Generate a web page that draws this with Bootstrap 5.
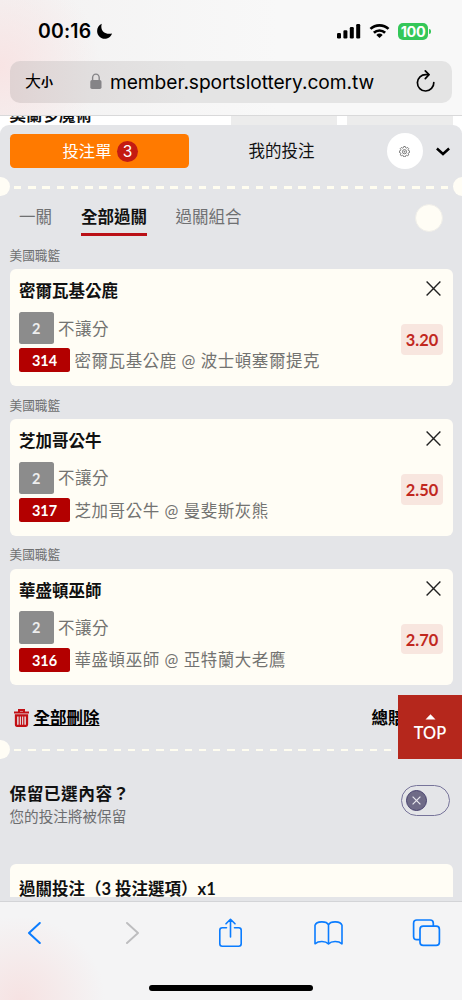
<!DOCTYPE html>
<html lang="zh-Hant">
<head>
<meta charset="utf-8">
<meta name="viewport" content="width=device-width, initial-scale=1">
<title>投注單</title>
<link href="https://cdn.jsdelivr.net/npm/bootstrap@5.3.0/dist/css/bootstrap.min.css" rel="stylesheet">
<style>
  body { font-family: Lato, "Noto Sans CJK TC", sans-serif; font-size: 16.5px; line-height: 24px; color: #111; background: #e4e5e8; }
  svg { display: block; flex: none; }
  .screen { width: 462px; height: 1000px; }
  .browser-top { height: 115.5px; border-bottom: 1px solid #d9d9da; font-family: Inter, "Noto Sans CJK TC", sans-serif; color: #000;
    background: radial-gradient(circle at 0 66px, #f8e4e4 0, rgba(248,228,228,0) 100px), linear-gradient(90deg, #f3f2f2, #f8f8f8 60%); }
  .status-row { height: 60.5px; padding: 2px 31px 0 38px; }
  .clock { font-size: 19.4px; font-weight: 600; letter-spacing: .2px; }
  .battery { width: 30px; height: 17px; border-radius: 5px; background: #34c759; color: #fff; font-size: 14.5px; font-weight: 700; letter-spacing: -.4px; line-height: 17px; }
  .battery-tip { width: 2px; height: 5px; border-radius: 0 2px 2px 0; background: #34c759; margin-left: 1px; }
  .address { height: 42.5px; margin: 0 10px; border-radius: 10px; padding: 0 17px 0 15px;
    background: linear-gradient(90deg, #e0d3d3, #e1dede 18%, #e4e4e4 40%); }
  .text-size { width: 28px; font-size: 16px; }
  .text-size span { font-size: 12px; font-weight: 700; }
  .address .host { font-family: Inter, sans-serif; font-size: 19.2px; letter-spacing: -.06px; }
  .peek { height: 17px; margin-bottom: -8px; background: #fff; font-size: 16.5px; font-weight: 700; }
  .peek-text { width: 231px; padding-left: 9.5px; line-height: 24px; margin-top: -12.5px; height: 28px; }
  .peek-cell { background: #ececec; height: 17px; }
  .page-top { height: 9.5px; overflow: visible; background: #fff; }
  .sheet { background: #e4e5e8; border-radius: 9px 9px 0 0; position: relative; overflow: hidden; }
  .sheet-tabs { height: 52px; padding-left: 9.5px; }
  .slip-btn { width: 179.5px; height: 34px; border-radius: 4.5px; background: #ff7a00; color: #fff; --bs-btn-hover-color: #fff; --bs-btn-hover-bg: #ff7a00; font-size: 16.3px; line-height: 24px; }
  .tally { width: 21px; height: 21px; background: #c41b12; font: 15.5px/21px Inter, sans-serif; }
  .gear { width: 36px; height: 36px; background: #fff; }
  .perf { height: 19px; }
  .notch { width: 19px; height: 19px; flex: none; border-radius: 50%; background: #fffdf5; }
  .dashes { height: 2.6px; margin: 1.5px 4.5px 0; background: repeating-linear-gradient(90deg, #fffdf0 0 7.4px, transparent 7.4px 14.22px); }
  .modes { height: 49px; color: #6f7072; }
  .mode-off { padding-top: 9px; }
  .mode-on { color: #111; font-weight: 700; border-bottom: 3.5px solid #ba1016; height: 32px; padding-top: 1px; }
  .dot { width: 28px; height: 28px; border: 1px solid #efeee9; background: #fffdf5; }
  .league { height: 24.4px; padding-left: 9.5px; font-size: 12.7px; line-height: 21.5px; color: #6e6f70; }
  .pick { height: 116.5px; margin: 0 9.5px 8.8px; border: 0; border-radius: 6px; background: #fffdf5; color: #111; padding: 8px 9.5px 0; }
  .pick-title { font-weight: 700; line-height: 27px; height: 27px; padding-top: 1px; }
  .soft { color: #737371; letter-spacing: .55px; padding-top: 1px; margin-left: 4.5px; }
  .tag { color: #fff; font-weight: 700; border-radius: 2.5px; font-size: 14.5px; text-align: center; flex: none; }
  .tag-kind { width: 34.5px; height: 32.5px; line-height: 33px; background: #8c8c8c; color: #eee; }
  .tag-code { width: 51px; height: 24px; line-height: 25px; background: #b30000; }
  .odds { width: 42px; height: 30.5px; line-height: 31px; border-radius: 4px; background: #f8e6df; color: #c1281e; font-size: 16.4px; font-weight: 700; text-align: center; }
  .totals { height: 50.5px; padding: 0 14px 3px; font-weight: 700; color: #000; }
  .to-top { position: absolute; right: 0; top: 570px; width: 64px; height: 64px; background: #b5271c; color: #fff; font-size: 16.3px; font-weight: 600; line-height: 22px; }
  .switch { width: 49.5px; height: 31px; border: 1px solid #77749a; border-radius: 16px; padding-left: 4px; }
  .knob { width: 21.5px; height: 21.5px; border: 1.3px solid #47416e; background: #6f6b87; }
  .combo { height: 33px; margin: 0 9.5px; border-radius: 6px 6px 0 0; background: #fffdf5; padding: 13px 9.5px 0; font-weight: 700; overflow: hidden; }
  .toolbar-area { height: 99px; border-top: 1px solid #d3d4d7; background: radial-gradient(circle at 20px 99px, #f6e2e2 0, rgba(246,226,226,0) 85px), #f4f4f5; }
  .toolbar-row { height: 62px; padding: 0 21px 0 19.5px; color: #0a7cff; }
  .toolbar-row svg { width: 29px; }
  .home-line { width: 164px; height: 6px; margin-top: 20.5px; background: #000; border-radius: 3px; }
</style>
</head>
<body>
<div class="screen d-flex flex-column overflow-hidden">
  <header class="browser-top flex-shrink-0">
    <div class="status-row d-flex align-items-center">
      <span class="clock">00:16</span>
      <svg width="17" height="17" viewBox="0 0 17 17" style="margin-left:5px"><path d="M5.800.8C.4 3.300-.2 10 3.300 13.500c4.200 4.300 11 2.200 12.700-3.100C10 12.200 3.500 8.500 5.800.8Z"/></svg>
      <svg class="ms-auto" width="24" height="16" viewBox="0 0 24 16"><rect x="0" y="10" width="4" height="5.500" rx="1.200"/><rect x="6.400" y="7.300" width="4" height="8.200" rx="1.200"/><rect x="12.800" y="4" width="4" height="11.500" rx="1.200"/><rect x="19.200" y="1" width="4" height="14.500" rx="1.200"/></svg>
      <svg style="margin-left:8px" width="21" height="16" viewBox="0 0 21 16" fill="none" stroke="#000" stroke-width="2.700"><path d="M1.500 5.900a13 13 0 0 1 18 0M4.900 9.700a8.200 8.200 0 0 1 11.200 0"/><path d="M10.500 15 7.300 11.900a4.700 4.700 0 0 1 6.400 0Z" fill="#000" stroke="none"/></svg>
      <span class="battery text-center" style="margin-left:8px">100</span><span class="battery-tip"></span>
    </div>
    <div class="address d-flex align-items-center">
      <span class="text-size text-nowrap">大<span>小</span></span>
      <svg style="margin-left:37px" width="12" height="17" viewBox="0 0 12 17"><rect x=".3" y="7" width="11.200" height="9" rx="1.700" fill="#858487"/><path d="M2.600 8V4.700a3.300 3.600 0 0 1 6.600 0V8" fill="none" stroke="#858487" stroke-width="1.400"/></svg>
      <span class="host" style="margin-left:8px">member.sportslottery.com.tw</span>
      <svg class="ms-auto" width="19" height="23" viewBox="0 0 19 23" fill="none" stroke="#000" stroke-width="1.700" stroke-linecap="round" stroke-linejoin="round"><path d="M12.600 4.600H10A8.200 8.200 0 1 0 17.800 12.500"/><path d="M9.300.9 13 4.700 9.300 8.600"/></svg>
    </div>
  </header>
  <div class="page-top flex-shrink-0">
    <div class="peek d-flex overflow-hidden">
      <div class="peek-text">奧蘭多魔術</div>
      <div class="peek-cell" style="width:106px"></div>
      <div class="peek-cell" style="width:106px;margin-left:10px"></div>
    </div>
  </div>
  <main class="sheet flex-grow-1">
    <div class="sheet-tabs d-flex align-items-center">
      <button class="btn slip-btn border-0 p-0 d-flex align-items-center justify-content-center"><span style="margin-left:2px">投注單</span><span class="tally rounded-circle" style="margin-left:5.500px">3</span></button>
      <span style="margin-left:59.500px">我的投注</span>
      <span class="gear rounded-circle d-flex align-items-center justify-content-center" style="margin-left:72px">
        <svg width="11" height="11" viewBox="0 0 22 22" fill="none" stroke="#555" stroke-width="1.500" stroke-linejoin="round"><path d="M9.500 1h3l.7 2.400 1.900.8 2.200-1.200 2.100 2.100-1.200 2.200.8 1.900 2.300.7v3l-2.300.7-.8 1.900 1.200 2.200-2.100 2.100-2.200-1.200-1.900.8-.7 2.400h-3l-.7-2.400-1.900-.8-2.200 1.200-2.100-2.100 1.200-2.200-.8-1.900L.7 12.900v-3L3 9.200l.8-1.900-1.200-2.200L4.700 3l2.200 1.200 1.900-.8Z"/><circle cx="11" cy="11.400" r="4.200"/><circle cx="11" cy="11.400" r="1"/></svg>
      </span>
      <svg style="margin-left:13.500px" width="14" height="9" viewBox="0 0 14 9" fill="none" stroke="#000" stroke-width="2.500"><path d="m.9 1.500 6.100 5.500 6.100-5.500"/></svg>
    </div>
    <div class="perf d-flex align-items-center"><span class="notch" style="margin-left:-9.500px"></span><span class="dashes flex-grow-1"></span><span class="notch" style="margin-right:-9.500px"></span></div>
    <nav class="modes d-flex">
      <span class="mode-off" style="margin-left:19px;width:62px">一關</span>
      <span class="mode-on mt-2" style="width:66px">全部過關</span>
      <span class="mode-off" style="margin-left:28.500px">過關組合</span>
      <span class="dot rounded-circle ms-auto" style="margin-right:19px;margin-top:8px"></span>
    </nav>
    <div id="picks"></div>
    <div class="totals d-flex align-items-center">
      <svg width="15" height="18" viewBox="0 0 15 18" fill="none" stroke="#c20f14"><path d="M0 3.500h15M5 3V.9h5V3" stroke-width="2"/><path d="M2 6.400h11v9.200q0 1.200-1 1.200H3q-1 0-1-1.200Z" stroke-width="2.300"/><path d="M5.200 7v9M7.500 7v9M9.800 7v9" stroke-width="1.200"/></svg>
      <span class="text-decoration-underline" style="margin-left:4.500px">全部刪除</span>
      <span class="text-nowrap" style="margin-left:272px;width:60px">總賠率</span>
    </div>
    <div class="perf d-flex align-items-center" style="margin-top:-5px"><span class="notch" style="margin-left:-9.500px"></span><span class="dashes flex-grow-1"></span><span class="notch" style="margin-right:-9.500px"></span></div>
    <div class="d-flex justify-content-between" style="height:105.500px;padding:23px 12px 0 9.500px">
      <div>
        <div style="font-size:16.700px;font-weight:700;letter-spacing:.5px;line-height:25px">保留已選內容？</div>
        <div style="font-size:14.600px;line-height:19px;color:#6d6e70">您的投注將被保留</div>
      </div>
      <span class="switch d-flex align-items-center" style="margin-top:3.500px"><span class="knob rounded-circle d-flex align-items-center justify-content-center"><svg width="9" height="9" viewBox="0 0 9 9" stroke="#e9e8ee" stroke-width="1.200"><path d="m.6.600 7.800 7.800M8.400.6.600 8.400"/></svg></span></span>
    </div>
    <div class="combo">過關投注（3 投注選項）x1</div>
    <div class="to-top d-flex flex-column align-items-center"><svg style="margin-top:18.500px" width="11" height="6" viewBox="0 0 11 6"><path d="M5.500.3 10.500 5.500H.5Z" fill="#fff"/></svg><span style="margin-top:2.500px">TOP</span></div>
  </main>
  <footer class="toolbar-area flex-shrink-0">
    <div class="toolbar-row d-flex align-items-center justify-content-between">
      <svg height="22" viewBox="0 0 14 22" fill="none" stroke="currentColor" stroke-width="2" stroke-linecap="round" stroke-linejoin="round"><path d="M12.300 1 1.500 11l10.800 10"/></svg>
      <svg height="22" viewBox="0 0 14 22" fill="none" stroke="#bdbdbf" stroke-width="1.900" stroke-linecap="round" stroke-linejoin="round"><path d="M1.500 1 12.500 11l-11 10"/></svg>
      <svg height="30" viewBox="0 0 24 30" fill="none" stroke="currentColor" stroke-width="1.600" stroke-linecap="round" stroke-linejoin="round"><path d="M8 9.800H3.800q-2.500 0-2.500 2.500v13.400q0 2.500 2.500 2.500h16.400q2.500 0 2.500-2.500V12.300q0-2.500-2.500-2.500H16M12 19V1.300M7.500 5.800 12 1.300l4.500 4.500"/></svg>
      <svg height="24" viewBox="0 0 29 24" fill="none" stroke="currentColor" stroke-width="1.600" stroke-linejoin="round"><path d="M14.500 3.800C12.500-.2 2.500-.1 1 4.300V22.800c3.500-3 10.500-3 13.500.2 3-3.200 10-3.200 13.500-.2V4.300C26.500-.1 16.500-.2 14.500 3.800V23"/></svg>
      <svg height="28" viewBox="0 0 28 28" fill="none" stroke="currentColor" stroke-width="1.700"><path d="M7.500 20.700H4.300Q1.100 20.700 1.100 17.500V4.200Q1.100 1 4.300 1h13.300q3.200 0 3.200 3.200v3"/><rect x="7.500" y="7.200" width="19.400" height="19.200" rx="3.200"/></svg>
    </div>
    <div class="home-line mx-auto"></div>
  </footer>
</div>
<script src="https://cdn.jsdelivr.net/npm/bootstrap@5.3.0/dist/js/bootstrap.bundle.min.js"></script>
<script>
  const picks = [
    { team: '密爾瓦基公鹿', away: '波士頓塞爾提克', code: '314', odds: '3.20' },
    { team: '芝加哥公牛', away: '曼斐斯灰熊', code: '317', odds: '2.50' },
    { team: '華盛頓巫師', away: '亞特蘭大老鷹', code: '316', odds: '2.70' }
  ];
  document.getElementById('picks').innerHTML = picks.map(p => `
    <div class="league">美國職籃</div>
    <section class="card pick">
      <div class="d-flex justify-content-between">
        <div class="pick-title">${p.team}</div>
        <svg style="margin:4px 2.500px 0 0" width="15" height="15" viewBox="0 0 15 15" stroke="#222" stroke-width="1.400"><path d="m.6.600 13.800 13.800M14.400.6.600 14.400"/></svg>
      </div>
      <div class="d-flex justify-content-between" style="margin-top:7.500px">
        <div>
          <div class="d-flex align-items-center"><span class="tag tag-kind">2</span><span class="soft">不讓分</span></div>
          <div class="d-flex align-items-center" style="margin-top:4px;height:24px"><span class="tag tag-code">${p.code}</span><span class="soft text-nowrap">${p.team} @ ${p.away}</span></div>
        </div>
        <span class="odds" style="margin-top:12.500px">${p.odds}</span>
      </div>
    </section>`).join('');
</script>
</body>
</html>
